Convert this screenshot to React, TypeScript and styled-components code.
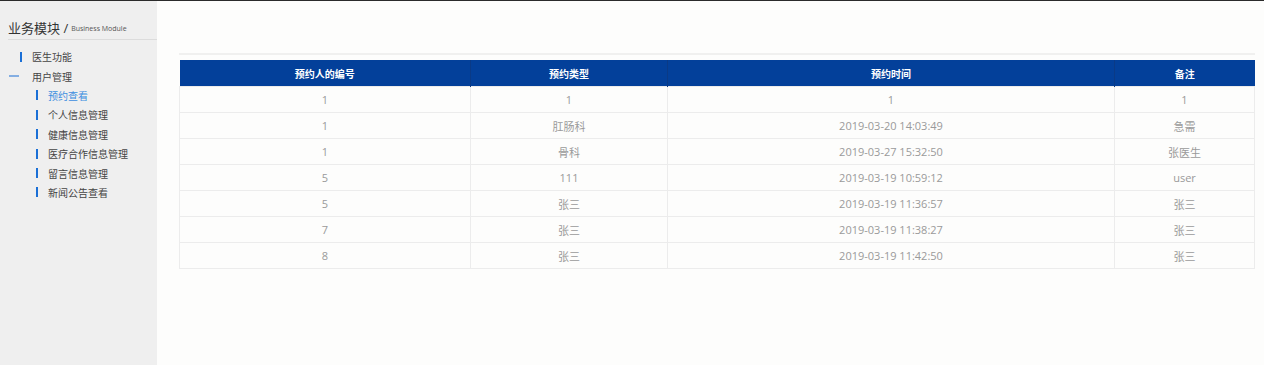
import React from "react";
import styled, { createGlobalStyle } from "styled-components";

const GlobalStyle = createGlobalStyle`
  html, body {
    margin: 0;
    padding: 0;
    background: #fdfdfc;
    font-family: "Open Sans", "Noto Sans CJK SC", sans-serif;
  }
`;

const Page = styled.div`
  display: flex;
  height: 365px;
  border-top: 1px solid #2b2b2b;
  box-sizing: border-box;
`;

const Sidebar = styled.div`
  width: 157px;
  flex-shrink: 0;
  background: #efefef;
`;

const SideTitle = styled.div`
  height: 39px;
  border-bottom: 1px solid #dcdcdc;
  margin-left: 8px;
  display: flex;
  align-items: flex-end;
  padding-bottom: 2px;
  box-sizing: border-box;
  color: #333;
  font-size: 13px;
`;

const SubTitle = styled.span`
  font-size: 7px;
  color: #555;
  margin-left: 3px;
  margin-bottom: 4px;
`;

const Menu = styled.ul`
  list-style: none;
  margin: 7px 0 0;
  padding: 0;
`;

const Item = styled.li<{ $level: number; $active?: boolean; $open?: boolean }>`
  position: relative;
  height: 19.4px;
  display: flex;
  align-items: center;
  padding-left: ${(p) => (p.$level === 0 ? 32 : 48)}px;
  font-size: 10px;
  color: ${(p) => (p.$active ? "#3d8ee0" : "#444")};

  &::before {
    content: "";
    position: absolute;
    background: #1a6fd6;
    left: ${(p) => (p.$open ? 9 : p.$level === 0 ? 20 : 36)}px;
    top: 50%;
    width: ${(p) => (p.$open ? 10 : 2)}px;
    height: ${(p) => (p.$open ? 1 : 10)}px;
    transform: translateY(-50%);
  }
`;

const Main = styled.div`
  flex: 1;
  padding: 52px 10px 0 22px;
`;

const TableWrap = styled.div`
  border-top: 2px solid #f0f0ef;
  padding-top: 5px;
`;

const Table = styled.table`
  width: 1075px;
  border-collapse: collapse;
  table-layout: fixed;
`;

const Th = styled.th`
  background: #03409a;
  color: #fff;
  font-size: 10px;
  font-weight: bold;
  height: 26px;
  padding: 0;
  border-right: 1px solid #0a3a86;
  &:last-child {
    border-right: none;
  }
`;

const Td = styled.td`
  height: 25px;
  padding: 0;
  text-align: center;
  color: #9a9a9a;
  font-size: 11px;
  border: 1px solid #ececec;
`;

const rows = [
  ["1", "1", "1", "1"],
  ["1", "肛肠科", "2019-03-20 14:03:49", "急需"],
  ["1", "骨科", "2019-03-27 15:32:50", "张医生"],
  ["5", "111", "2019-03-19 10:59:12", "user"],
  ["5", "张三", "2019-03-19 11:36:57", "张三"],
  ["7", "张三", "2019-03-19 11:38:27", "张三"],
  ["8", "张三", "2019-03-19 11:42:50", "张三"],
];

const subs = ["预约查看", "个人信息管理", "健康信息管理", "医疗合作信息管理", "留言信息管理", "新闻公告查看"];

export default function App() {
  return (
    <>
      <GlobalStyle />
      <Page>
        <Sidebar>
          <SideTitle>
            业务模块 /<SubTitle>Business Module</SubTitle>
          </SideTitle>
          <Menu>
            <Item $level={0}>医生功能</Item>
            <Item $level={0} $open>
              用户管理
            </Item>
            {subs.map((s, i) => (
              <Item key={s} $level={1} $active={i === 0}>
                {s}
              </Item>
            ))}
          </Menu>
        </Sidebar>
        <Main>
          <TableWrap>
            <Table>
              <colgroup>
                <col style={{ width: 291 }} />
                <col style={{ width: 197 }} />
                <col style={{ width: 447 }} />
                <col style={{ width: 140 }} />
              </colgroup>
              <thead>
                <tr>
                  <Th>预约人的编号</Th>
                  <Th>预约类型</Th>
                  <Th>预约时间</Th>
                  <Th>备注</Th>
                </tr>
              </thead>
              <tbody>
                {rows.map((r, i) => (
                  <tr key={i}>
                    {r.map((c, j) => (
                      <Td key={j}>{c}</Td>
                    ))}
                  </tr>
                ))}
              </tbody>
            </Table>
          </TableWrap>
        </Main>
      </Page>
    </>
  );
}
